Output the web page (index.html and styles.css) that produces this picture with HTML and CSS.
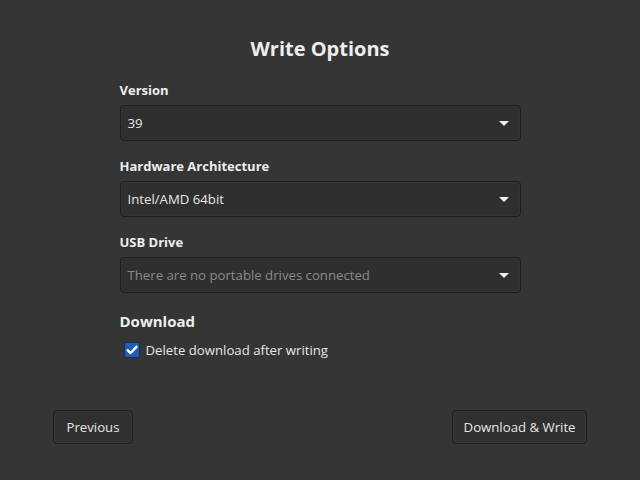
FILE: index.html
```html
<!DOCTYPE html>
<html>
<head>
<meta charset="utf-8">
<link rel="stylesheet" href="styles.css">
</head>
<body>
<div class="page">
  <main class="options">
    <h1 class="title">Write Options</h1>
    <label class="field-label">Version</label>
    <div class="combo"><span class="combo-text">39</span><span class="arrow"></span></div>
    <label class="field-label">Hardware Architecture</label>
    <div class="combo"><span class="combo-text">Intel/AMD 64bit</span><span class="arrow"></span></div>
    <label class="field-label">USB Drive</label>
    <div class="combo"><span class="combo-text placeholder">There are no portable drives connected</span><span class="arrow"></span></div>
    <h2 class="section">Download</h2>
    <div class="check-row">
      <span class="checkbox"><svg width="12" height="10" viewBox="0 0 12 10"><path d="M1.5 5.2 L4.5 8 L10.5 1.8" fill="none" stroke="#fff" stroke-width="2.4" stroke-linecap="round" stroke-linejoin="round"/></svg></span>
      <span class="check-text">Delete download after writing</span>
    </div>
  </main>
  <footer class="footer">
    <button class="btn btn-prev">Previous</button>
    <button class="btn btn-next">Download &amp; Write</button>
  </footer>
</div>
</body>
</html>
```
FILE: styles.css
```css
html, body {
  margin: 0;
  padding: 0;
  background: #353535;
}
body {
  font-family: "Open Sans", "Noto Sans", sans-serif;
  color: #e8e8e8;
}
.page {
  height: 480px;
  display: flex;
  flex-direction: column;
}
.options {
  width: 401px;
  margin: 0 auto;
  padding-top: 35px;
  display: flex;
  flex-direction: column;
}
.title {
  margin: 0 0 18px;
  font-size: 20px;
  line-height: 28px;
  font-weight: 700;
  text-align: center;
  color: #eeeeee;
}
.field-label {
  font-size: 13px;
  line-height: 18px;
  font-weight: 700;
  color: #eeeeee;
  margin-bottom: 6px;
}
.combo {
  height: 36px;
  box-sizing: border-box;
  border: 1px solid #1e1e1e;
  border-radius: 4px;
  background: #2f2f2f;
  box-shadow: inset 0 0 0 1px #333;
  display: flex;
  align-items: center;
  justify-content: space-between;
  padding: 0 11px 0 7px;
  margin-bottom: 16px;
}
.combo-text {
  font-size: 13.2px;
  color: #e6e6e6;
}
.combo-text.placeholder {
  color: #8a8a8a;
}
.arrow {
  width: 0;
  height: 0;
  border-left: 5px solid transparent;
  border-right: 5px solid transparent;
  border-top: 5px solid #f0f0f0;
}
.section {
  margin: 2px 0 9px;
  font-size: 15px;
  line-height: 20px;
  font-weight: 700;
  color: #eeeeee;
}
.check-row {
  display: flex;
  align-items: center;
  height: 20px;
  padding-left: 4px;
}
.checkbox {
  width: 16px;
  height: 16px;
  box-sizing: border-box;
  border: 1px solid #0f2f5c;
  border-radius: 3px;
  background: #1f5db7;
  display: flex;
  align-items: center;
  justify-content: center;
  margin-right: 6px;
}
.check-text {
  font-size: 13.2px;
  color: #e6e6e6;
}
.footer {
  margin-top: auto;
  margin-bottom: 36px;
  padding: 0 53px;
  display: flex;
  justify-content: space-between;
}
.btn {
  height: 34px;
  box-sizing: border-box;
  border: 1px solid #1e1e1e;
  border-radius: 4px;
  background: #303030;
  box-shadow: inset 0 0 0 1px #383838;
  color: #e6e6e6;
  font-family: "Open Sans", "Noto Sans", sans-serif;
  font-size: 13.2px;
  padding: 0 12.5px;
}
.btn-next {
  padding: 0 10.5px;
}
```
